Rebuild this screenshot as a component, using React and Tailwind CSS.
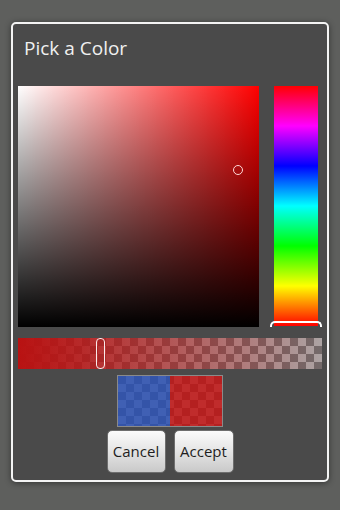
import React from "react";

export default function App() {
  return (
    <div className="w-[340px] h-[510px] bg-[#5e5f5d] pt-[22px] pl-[11px] overflow-hidden" style={{ fontFamily: '"Open Sans", "Noto Sans", sans-serif' }}>
      <div className="w-[318px] h-[460px] border-2 border-[#f4f4f4] rounded-[5px] bg-[#4a4a4a] shadow-[0_1px_6px_rgba(0,0,0,0.45)] flex flex-col">
        <div className="h-[62px] pl-[11px] pt-[11px] text-[19px] leading-[26px] text-[#f0f0f0]">Pick a Color</div>
        <div className="flex pl-[5px] gap-[15px]">
          <div className="relative w-[241px] h-[241px] bg-[#ff0000]">
            <div className="absolute inset-0 bg-[linear-gradient(to_right,#ffffff,rgba(255,255,255,0))]" />
            <div className="absolute inset-0 bg-[linear-gradient(to_bottom,rgba(0,0,0,0),#000000)]" />
            <div className="absolute left-[215px] top-[79px] w-[10px] h-[10px] rounded-full border-[1.5px] border-[#ffd8d8]" />
          </div>
          <div className="relative w-[44px] h-[240px] bg-[linear-gradient(to_bottom,#ff0000,#ff00ff_16.67%,#0000ff_33.33%,#00ffff_50%,#00ff00_66.67%,#ffff00_83.33%,#ff0000)]">
            <div className="absolute left-[-4px] right-[-4px] bottom-[-1px] h-[6px] border-t-2 border-x-2 border-white rounded-t-[5px]" />
          </div>
        </div>
        <div className="relative ml-[5px] mt-[11px] w-[304px] h-[31px] bg-[conic-gradient(#ababab_25%,#6f6f6f_0_50%,#ababab_0_75%,#6f6f6f_0)] bg-size-[16px_16px]">
          <div className="absolute inset-0 bg-[linear-gradient(to_right,rgba(185,18,18,1),rgba(185,18,18,0.85)_20%,rgba(185,18,18,0.05))]" />
          <div className="absolute left-[78px] top-0 w-[9px] h-[31px] rounded-[4px] border-[1.5px] border-[#fbeaea]" />
        </div>
        <div className="self-center mt-[6px] w-[106px] h-[52px] border border-[#8a8a8a] flex bg-[conic-gradient(#ababab_25%,#6f6f6f_0_50%,#ababab_0_75%,#6f6f6f_0)] bg-size-[16px_16px]">
          <div className="flex-1 bg-[rgba(37,77,183,0.8)]" />
          <div className="flex-1 bg-[rgba(197,12,12,0.8)]" />
        </div>
        <div className="self-center mt-[3px] flex gap-[8px]">
          <button className="w-[59px] h-[43px] rounded-[5px] border border-[#6e6e6e] bg-[linear-gradient(to_bottom,#fbfbfb,#e4e4e4_50%,#c9c9c9)] text-[15px] text-[#1e1e1e] flex items-center justify-center">Cancel</button>
          <button className="w-[60px] h-[43px] rounded-[5px] border border-[#6e6e6e] bg-[linear-gradient(to_bottom,#fbfbfb,#e4e4e4_50%,#c9c9c9)] text-[15px] text-[#1e1e1e] flex items-center justify-center">Accept</button>
        </div>
      </div>
    </div>
  );
}
